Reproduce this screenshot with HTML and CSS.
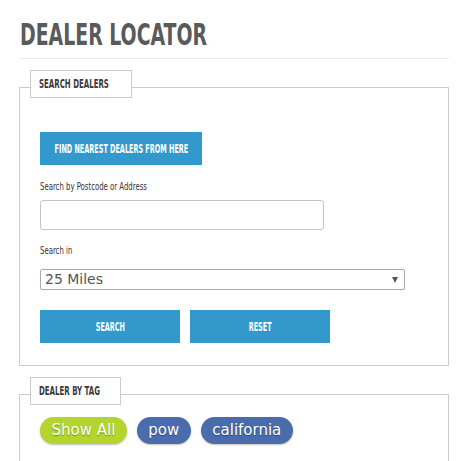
FILE: index.html
```html
<!DOCTYPE html>
<html>
<head>
<meta charset="utf-8">
<link rel="stylesheet" href="styles.css">
</head>
<body>
<div class="page">
  <div class="head"><h1 class="title"><span class="sq">DEALER LOCATOR</span></h1></div>

  <div class="panel panel-search">
    <div class="legend"><span class="sq">SEARCH DEALERS</span></div>
    <div class="body">
      <button class="btn btn-near"><span class="sq">FIND NEAREST DEALERS FROM HERE</span></button>
      <label class="lbl"><span class="sq">Search by Postcode or Address</span></label>
      <input class="txt" type="text">
      <label class="lbl lbl2"><span class="sq">Search in</span></label>
      <div class="sel">
        <span class="sel-val">25 Miles</span>
        <span class="sel-arrow"></span>
      </div>
      <div class="actions">
        <button class="btn btn-act"><span class="sq">SEARCH</span></button>
        <button class="btn btn-act"><span class="sq">RESET</span></button>
      </div>
    </div>
  </div>

  <div class="panel panel-tags">
    <div class="legend"><span class="sq">DEALER BY TAG</span></div>
    <div class="tags">
      <span class="pill pill-all">Show All</span>
      <span class="pill pill-tag">pow</span>
      <span class="pill pill-tag">california</span>
    </div>
  </div>
</div>
</body>
</html>
```

FILE: styles.css
```css
html, body { margin: 0; padding: 0; background: #fff; }
body { overflow: hidden; font-family: "DejaVu Sans Condensed", "DejaVu Sans", sans-serif; }
.page { padding: 20px 0 0 19px; width: 430px; }

.sq {
  display: inline-block;
  font-family: "DejaVu Sans Condensed", "DejaVu Sans", sans-serif;
  transform: scaleX(0.7);
  transform-origin: left center;
  white-space: nowrap;
  vertical-align: top;
}

.head { border-bottom: 1px solid #ebebeb; padding-bottom: 8px; padding-left: 1px; }
.title { margin: 0; font-size: 30px; line-height: 30px; font-weight: bold; color: #5a5a5a; }
.title .sq { font-weight: bold; }

.panel { border: 1px solid #cccccc; margin-top: 28px; }
.panel-tags { height: 80px; }
.legend {
  width: max-content;
  box-sizing: border-box;
  height: 28px;
  margin: -18px 0 0 10px;
  border: 1px solid #cccccc;
  background: #fff;
  padding: 0 0 0 8px;
  font-size: 12px;
  line-height: 26px;
  color: #3a3a3a;
}
.legend .sq { font-weight: bold; transform: scaleX(0.65); }
.panel-search .legend { width: 102px; }
.panel-tags .legend { width: 91px; }

.body { padding: 34px 0 22px 20px; }

.btn {
  display: flex;
  align-items: center;
  justify-content: center;
  border: 0;
  padding: 0;
  margin: 0;
  background: #3399cc;
  color: #fff;
  font-family: "DejaVu Sans Condensed", "DejaVu Sans", sans-serif;
  font-size: 12px;
  line-height: 14px;
  height: 33px;
  overflow: visible;
}
.btn .sq { font-weight: bold; transform: scaleX(0.6); transform-origin: center center; }
.btn-near { width: 162px; }

.lbl { display: block; margin-top: 15px; font-size: 11px; line-height: 14px; height: 14px; color: #3b3131; }
.lbl2 { margin-top: 14px; }

.txt {
  display: block;
  box-sizing: border-box;
  margin: 6px 0 0 0;
  width: 284px;
  height: 30px;
  border: 1px solid #c4c4c4;
  border-radius: 3px;
  background: #fff;
  padding: 0;
}

.sel {
  position: relative;
  box-sizing: border-box;
  margin-top: 11px;
  width: 365px;
  height: 21px;
  border: 1px solid #aaaaaa;
  border-radius: 2px;
  padding-left: 4px;
  font-family: "DejaVu Sans", Verdana, sans-serif;
  font-size: 14px;
  line-height: 19px;
  color: #555;
}
.sel-arrow {
  position: absolute;
  right: 6px;
  top: 7px;
  width: 0; height: 0;
  border-left: 3px solid transparent;
  border-right: 3px solid transparent;
  border-top: 6px solid #555;
}

.actions { display: flex; gap: 10px; margin-top: 20px; }
.btn-act { width: 140px; }

.tags { display: flex; gap: 10px; padding: 12px 0 0 20px; }
.pill {
  display: inline-block;
  height: 27px;
  line-height: 27px;
  padding: 0 11.5px;
  border-radius: 14px;
  font-family: "DejaVu Sans", Verdana, sans-serif;
  font-size: 15px;
  color: #fff;
  text-shadow: 0 1px 1px rgba(0,0,0,0.35);
  box-shadow: 0 1px 2px rgba(0,0,0,0.25);
}
.pill-all { background: #b4d52b; }
.pill-tag { background: #4a6cad; }
```
